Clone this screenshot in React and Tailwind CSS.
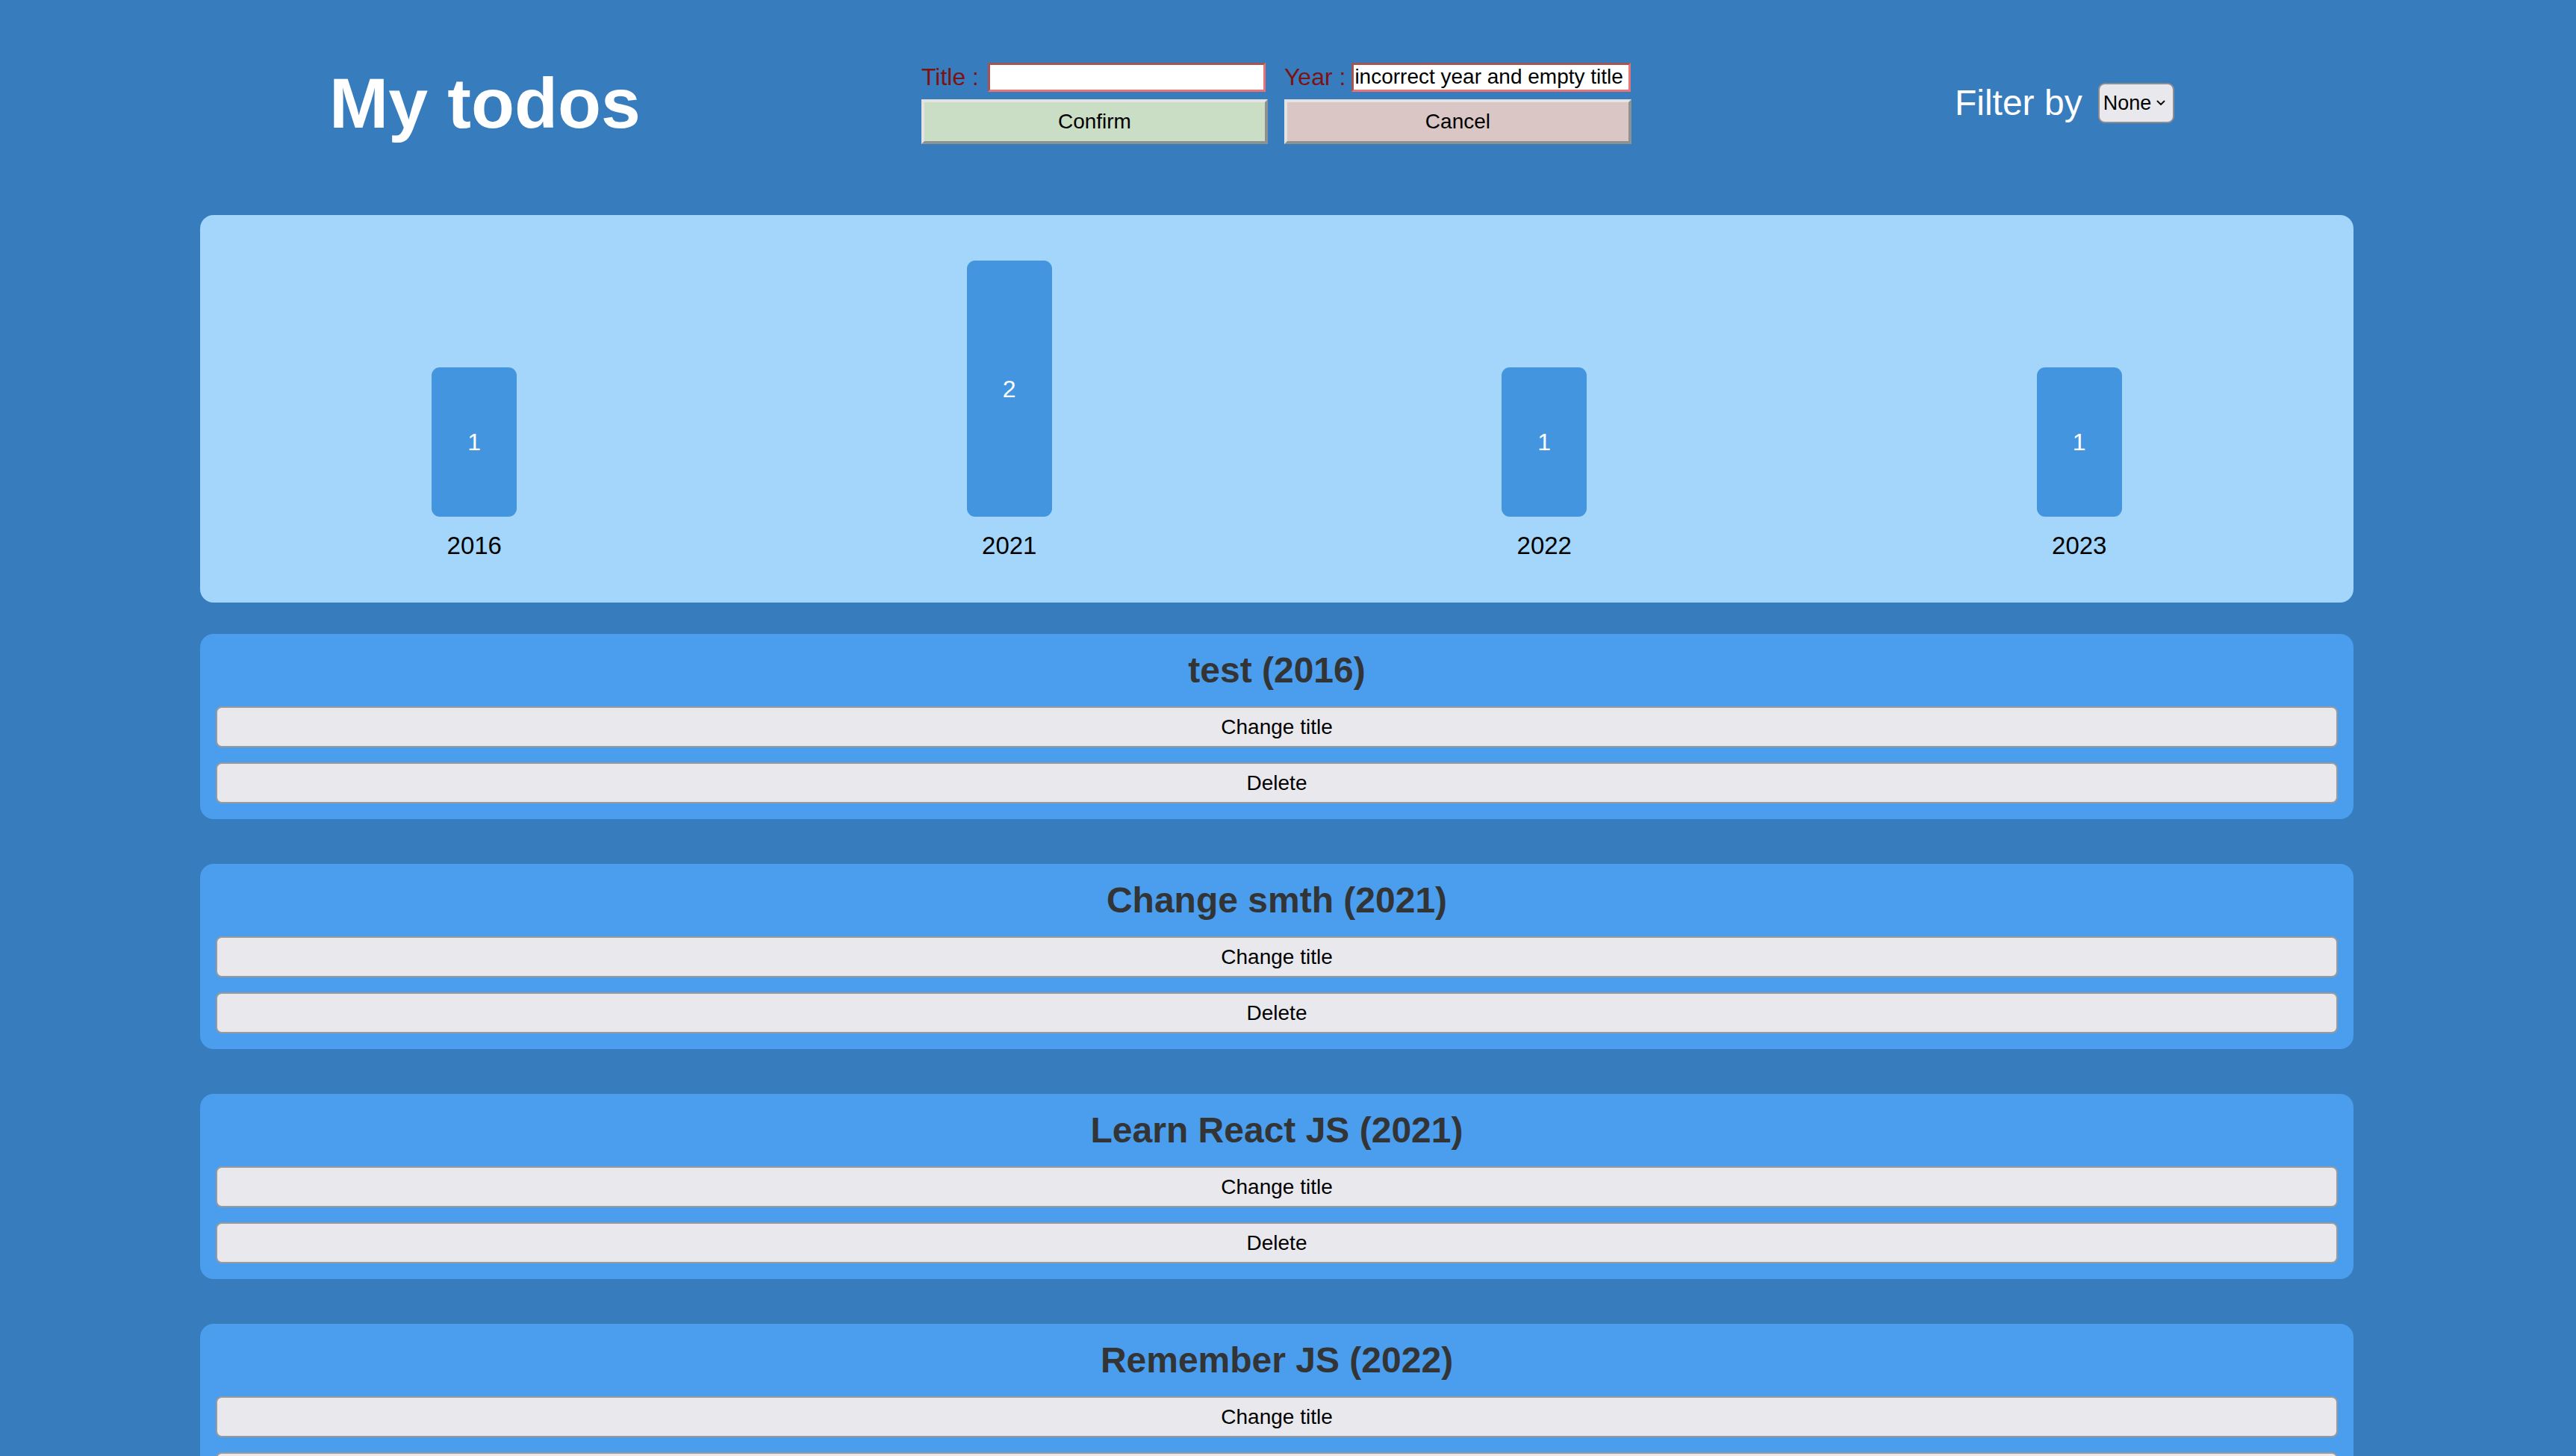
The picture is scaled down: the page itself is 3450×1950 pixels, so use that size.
import React, { useState } from 'react'

const todos = [
  { id: 1, title: 'test', year: 2016 },
  { id: 2, title: 'Change smth', year: 2021 },
  { id: 3, title: 'Learn React JS', year: 2021 },
  { id: 4, title: 'Remember JS', year: 2022 },
  { id: 5, title: 'Learn Tailwind', year: 2023 },
]

// count todos per year for the little bar chart
const countByYear = (list) => {
  const counts = {}
  list.forEach((t) => {
    counts[t.year] = (counts[t.year] || 0) + 1
  })
  return Object.keys(counts)
    .sort()
    .map((year) => ({ year, count: counts[year] }))
}

const Chevron = () => (
  <svg width="12" height="8" viewBox="0 0 12 8" fill="none">
    <path d="M1.5 1.5 L6 6 L10.5 1.5" stroke="#111" strokeWidth="2" strokeLinecap="round" strokeLinejoin="round" />
  </svg>
)

const Header = () => {
  const [title, setTitle] = useState('')
  const [year, setYear] = useState('incorrect year and empty title')

  return (
    <header className="flex items-center pt-[83px] pl-[441px]">
      <h1 className="shrink-0 text-[95px] leading-[110px] font-bold text-white whitespace-nowrap">My todos</h1>

      <form className="shrink-0 ml-[376px] grid grid-cols-[464px_465px] gap-x-[22px] gap-y-[10px]">
        <div className="flex items-center whitespace-nowrap">
          <label className="shrink-0 text-[32px] leading-[39px] text-[#7d1212]">Title :</label>
          <input
            value={title}
            onChange={(e) => setTitle(e.target.value)}
            className="shrink-0 ml-[12px] w-[372px] h-[39px] bg-white border-[3px] border-t-[#a65451] border-l-[#a65451] border-b-[#ea7373] border-r-[#ea7373] px-[1px] text-[28px] leading-none text-black outline-none"
          />
        </div>
        <div className="flex items-center whitespace-nowrap">
          <label className="shrink-0 text-[32px] leading-[39px] text-[#7d1212]">Year :</label>
          <input
            value={year}
            onChange={(e) => setYear(e.target.value)}
            className="shrink-0 ml-[8px] w-[374px] h-[39px] bg-white border-[3px] border-t-[#a65451] border-l-[#a65451] border-b-[#ea7373] border-r-[#ea7373] px-[1px] text-[28px] leading-none text-black outline-none"
          />
        </div>
        <button
          type="button"
          className="h-[60px] bg-[#c9dec5] border-4 border-t-[#e3e3e3] border-l-[#e3e3e3] border-b-[#8e9192] border-r-[#8e9192] text-[28px] text-black"
        >
          Confirm
        </button>
        <button
          type="button"
          className="h-[60px] bg-[#dbc6c6] border-4 border-t-[#e3e3e3] border-l-[#e3e3e3] border-b-[#8e9192] border-r-[#8e9192] text-[28px] text-black"
        >
          Cancel
        </button>
      </form>

      <div className="shrink-0 ml-[433px] flex items-center">
        <span className="text-[48px] leading-[56px] text-white whitespace-nowrap">Filter by</span>
        <div className="relative ml-[21px]">
          <select className="appearance-none w-[102px] h-[54px] bg-[#e9e8ed] border-2 border-[#8d8d92] rounded-[9px] pl-[5px] text-[27px] text-black outline-none">
            <option>None</option>
            <option>2016</option>
            <option>2021</option>
            <option>2022</option>
            <option>2023</option>
          </select>
          <span className="pointer-events-none absolute right-[12px] top-[23px]">
            <Chevron />
          </span>
        </div>
      </div>
    </header>
  )
}

const Chart = ({ data }) => (
  <section className="mt-[95px] ml-[268px] w-[2884px] bg-[#a3d6fa] rounded-[18px] pt-[61px] pb-[57px] px-[9px] grid grid-cols-4 items-end">
    {data.map((d) => (
      <div key={d.year} className="flex flex-col items-center">
        <div
          className="w-[114px] bg-[#4495e0] rounded-[11px] flex items-center justify-center text-[32px] text-white"
          style={{ height: 57 + d.count * 143 }}
        >
          {d.count}
        </div>
        <span className="mt-[20px] text-[33px] leading-[38px] text-black">{d.year}</span>
      </div>
    ))}
  </section>
)

const TodoCard = ({ todo }) => (
  <div className="w-[2884px] bg-[#4a9eed] rounded-[18px] px-[21px] pt-[21px] pb-[21px] flex flex-col">
    <h2 className="h-[55px] text-[48px] leading-[55px] font-bold text-[#333436] text-center">
      {todo.title} ({todo.year})
    </h2>
    <button className="mt-[21px] h-[55px] bg-[#e9e8ed] border-2 border-[#9a9a9a] rounded-[8px] text-[28px] text-black">
      Change title
    </button>
    <button className="mt-[20px] h-[55px] bg-[#e9e8ed] border-2 border-[#9a9a9a] rounded-[8px] text-[28px] text-black">
      Delete
    </button>
  </div>
)

export default function App() {
  return (
    <div className="min-h-screen bg-[#377dbe] pb-[60px] font-['Liberation_Sans',Arial,sans-serif]">
      <Header />
      <Chart data={countByYear(todos)} />
      <div className="mt-[42px] ml-[268px] flex flex-col gap-[60px]">
        {todos.map((t) => (
          <TodoCard key={t.id} todo={t} />
        ))}
      </div>
    </div>
  )
}
